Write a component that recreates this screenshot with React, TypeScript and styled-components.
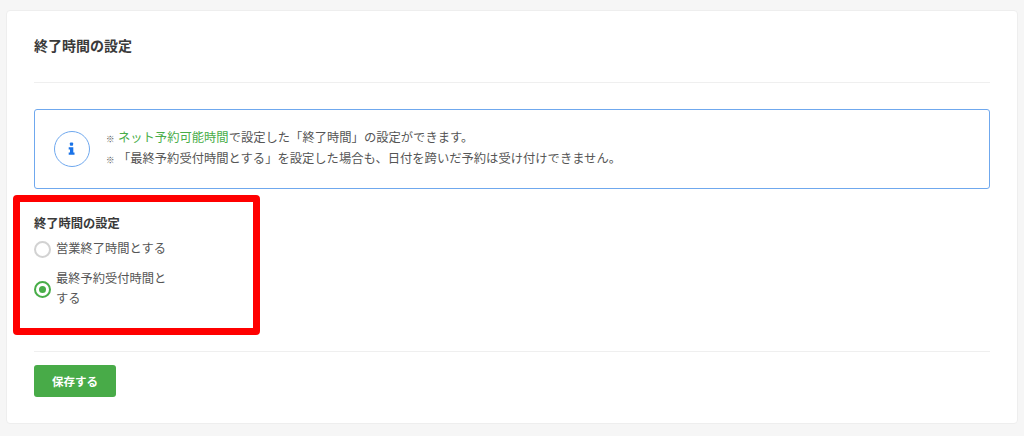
import React from "react";
import styled, { createGlobalStyle } from "styled-components";

const Global = createGlobalStyle`
  html, body { margin: 0; padding: 0; background: #f6f6f6; }
  * { box-sizing: border-box; }
  body { font-family: "Liberation Sans", "Noto Sans CJK JP", sans-serif; color: #333; }
`;
const Page = styled.div`
  width: 1024px; height: 436px; padding: 10px 6px 12px; overflow: hidden;
`;
const Card = styled.section`
  height: 414px; background: #fff; border: 1px solid #eeeeee; border-radius: 4px; padding: 0 27px;
`;
const Title = styled.h2`
  margin: 0; height: 72px; padding-top: 25px; font-size: 14px; line-height: 20px; font-weight: 700; color: #3a3a3a;
  border-bottom: 1px solid #efefef;
`;
const Info = styled.div`
  margin-top: 26px; height: 80px; border: 1px solid #6fa8ee; border-radius: 3px; display: flex; align-items: center; padding-left: 19px; gap: 16px;
`;
const Notes = styled.div`
  font-size: 12.3px; line-height: 20px; color: #555;
`;
const Mark = styled.span`
  font-size: 8.5px; color: #555;
`;
const Link = styled.span`
  color: #48ad48;
`;
const Section = styled.div`
  width: 210px; position: relative; margin-top: 26px;
`;
const Label = styled.div`
  font-size: 12.25px; line-height: 18px; font-weight: 700; color: #3a3a3a;
`;
const Row = styled.label`
  display: flex; align-items: center; gap: 5px; font-size: 12.25px; line-height: 20px; color: #555; width: 139px;
`;
const Options = styled.div`
  display: flex; flex-direction: column; gap: 10px; margin-top: 6px;
`;
const Circle = styled.span<{ $on?: boolean }>`
  width: 17px; height: 17px; flex: none; border-radius: 50%; background: #fff;
  border: 2px solid ${p => (p.$on ? "#48ad48" : "#d2d2d2")};
  display: flex; align-items: center; justify-content: center;
  &::after { content: ""; width: 7px; height: 7px; border-radius: 50%; background: ${p => (p.$on ? "#48ad48" : "transparent")}; }
`;
const Highlight = styled.div`
  position: absolute; left: -21px; top: -20px; width: 247px; height: 140px; border: 7px solid #ff0000; border-radius: 4px;
`;
const Footer = styled.div`
  margin-top: 42px; border-top: 1px solid #efefef; padding-top: 13px;
`;
const Save = styled.button`
  width: 82px; height: 32px; border: 0; border-radius: 3px; background: #48ab48; color: #fff; font: 700 11.5px "Liberation Sans", "Noto Sans CJK JP", sans-serif;
`;

export default function App() {
  return (
    <Page>
      <Global />
      <Card>
        <Title>終了時間の設定</Title>
        <Info>
          <svg width="36" height="36" viewBox="0 0 36 36" aria-hidden="true">
            <circle cx="18" cy="18" r="17.5" fill="#fff" stroke="#6fa8ee" />
            <rect x="15.9" y="11.4" width="3.2" height="3.4" rx="0.8" fill="#1a73e8" />
            <path d="M14.7 16.2h4.6v5.4h1.2v2.2h-5.8v-2.2h1.3v-3.2h-1.3z" fill="#1a73e8" />
          </svg>
          <Notes>
            <div><Mark>※</Mark> <Link>ネット予約可能時間</Link>で設定した「終了時間」の設定ができます。</div>
            <div><Mark>※</Mark> 「最終予約受付時間とする」を設定した場合も、日付を跨いだ予約は受け付けできません。</div>
          </Notes>
        </Info>
        <Section>
          <Label>終了時間の設定</Label>
          <Options>
            <Row><Circle />営業終了時間とする</Row>
            <Row><Circle $on />最終予約受付時間とする</Row>
          </Options>
          <Highlight />
        </Section>
        <Footer><Save>保存する</Save></Footer>
      </Card>
    </Page>
  );
}
